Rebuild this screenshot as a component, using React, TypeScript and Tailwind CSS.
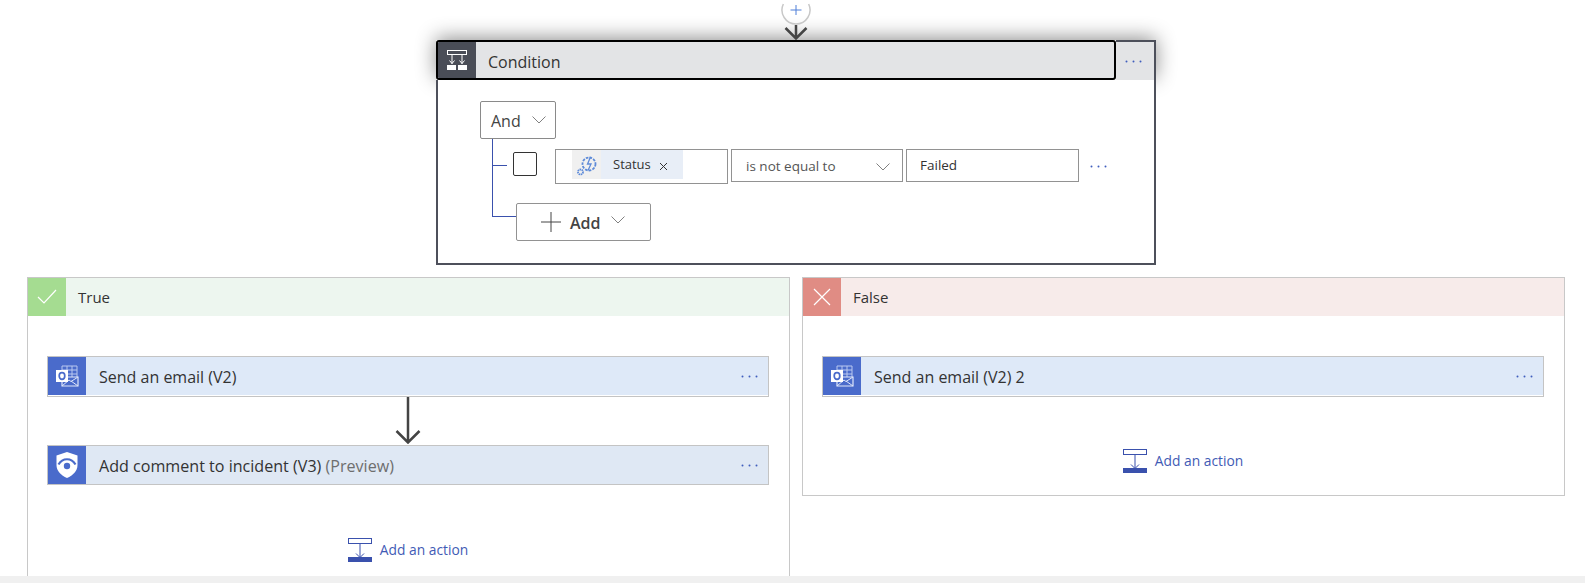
import type { ReactNode } from "react";

const FONT = "font-['Open_Sans','Noto_Sans',sans-serif]";

function Chevron({ className }: { className?: string }) {
  return (
    <svg width="14" height="8" viewBox="0 0 14 8" fill="none" className={className}>
      <path d="M0.500 0.500l6.500 6.500 6.500-6.500" stroke="#808080" strokeWidth="1" />
    </svg>
  );
}

function Dots() {
  return (
    <svg width="17" height="3" viewBox="0 0 17 3" fill="#3f5dbd">
      <circle cx="1.500" cy="1.500" r="1" />
      <circle cx="8.500" cy="1.500" r="1" />
      <circle cx="15.500" cy="1.500" r="1" />
    </svg>
  );
}

function ConditionIcon() {
  return (
    <svg width="22" height="22" viewBox="0 0 22 22" fill="none" stroke="#fff">
      <rect x="1.500" y="1.500" width="19" height="4" strokeWidth="1" />
      <path d="M6 6v9M16 6v9M3.500 11.500L6 14.500l2.500-3M13.500 11.500l2.500 3 2.500-3" strokeWidth="1" />
      <rect x="1" y="16" width="9" height="5" fill="#fff" stroke="none" />
      <rect x="12" y="16" width="9" height="5" fill="#fff" stroke="none" />
    </svg>
  );
}

function OutlookIcon() {
  return (
    <svg width="24" height="24" viewBox="0 0 24 24" fill="none">
      <path d="M7 2h15v12H7z" stroke="#b9c9f0" strokeWidth="1" />
      <path d="M12 2v11M17 2v11M7 6h15M7 10h15" stroke="#b9c9f0" strokeWidth="1" />
      <path d="M7 13h16v9H7z" fill="#4a6bcb" stroke="#dfe7fa" strokeWidth="1.200" />
      <path d="M7 22l7-6 2 1.500 7-4.500M16 17l7 5" stroke="#dfe7fa" strokeWidth="1" />
      <rect x="1" y="6" width="12" height="12" fill="#fff" />
      <ellipse cx="7" cy="12" rx="2.800" ry="3.300" stroke="#4a6bcb" strokeWidth="1.700" />
    </svg>
  );
}

function SentinelIcon() {
  return (
    <svg width="24" height="28" viewBox="0 0 24 28" fill="none">
      <path d="M12 1l10.500 3.500V14c0 6-4.500 10.500-10.500 13C6 24.500 1.500 20 1.500 14V4.500z" fill="#fff" />
      <path d="M3.500 13.500C7.500 6.500 16.500 6.500 20.500 13.500" stroke="#4a6bcb" strokeWidth="2.200" />
      <circle cx="12" cy="15" r="3.200" fill="#4a6bcb" />
    </svg>
  );
}

function AddActionIcon() {
  return (
    <svg width="24" height="24" viewBox="0 0 24 24" fill="none" stroke="#3a51ad">
      <rect x="0.500" y="0.500" width="23" height="5" strokeWidth="1" />
      <path d="M12 6v13M8 15.500l4 4 4-4" strokeWidth="1" />
      <rect x="0" y="19" width="24" height="5" fill="#3a51ad" stroke="none" />
    </svg>
  );
}

function AddAction() {
  return (
    <div className="flex items-center gap-2">
      <AddActionIcon />
      <span className="pt-[1px] text-[13.8px] text-[#3f5bb5]">Add an action</span>
    </div>
  );
}

function EmailCard({ children }: { children: ReactNode }) {
  return (
    <div className="flex h-[41px] items-stretch border border-[#c4c4c4] bg-[#dee9f8] shadow-[inset_0_-1px_0_#fff]">
      <div className="mb-px flex w-[38px] items-center justify-center bg-[#4a6bcb]">
        <OutlookIcon />
      </div>
      <div className="flex-1 pl-[13px] text-[16px] leading-[40px] text-[#333]">{children}</div>
      <div className="flex items-center pr-[10px]">
        <Dots />
      </div>
    </div>
  );
}

function Arrow({ height }: { height: number }) {
  return (
    <svg width="26" height={height} viewBox={`0 0 26 ${height}`} fill="none" stroke="#444" strokeWidth="2.500">
      <path d={`M13 0V${height - 1}M1.500 ${height - 13}L13 ${height - 1.500}L24.500 ${height - 13}`} />
    </svg>
  );
}

function Condition() {
  return (
    <div className="w-[720px]">
      <div className="flex h-[40px] shadow-[0_-2px_20px_rgba(0,0,0,0.45)]">
        <div className="flex w-[680px] items-stretch overflow-hidden rounded-[3px] border-2 border-black bg-[#e3e4e6]">
          <div className="flex w-[38px] items-center justify-center bg-[#4a4d57]">
            <ConditionIcon />
          </div>
          <div className="pl-3 pt-[2px] text-[16px] leading-[36px] text-[#333]">Condition</div>
        </div>
        <div className="flex flex-1 items-center border-t-2 border-r-2 border-[#4d505b] bg-[#e3e4e6] pl-[9px]">
          <Dots />
        </div>
      </div>
      <div className="relative h-[185px] border-x-2 border-b-2 border-[#4d505b] bg-white pl-[42px] pt-[21px]">
        <div className="flex h-[38px] w-[76px] items-center rounded-[2px] border border-[#8a8a8a] pl-[10px] text-[16px] text-[#444]">
          <span className="pt-[1px]">And</span>
          <Chevron className="ml-[11px]" />
        </div>
        <div className="relative ml-[12px]">
          <div className="absolute left-0 top-0 h-[78px] w-px bg-[#3a51ad]" />
          <div className="flex items-start pt-[10px]">
            <div className="mt-[16px] h-px w-[15px] bg-[#3a51ad]" />
            <div className="ml-[6px] mt-[3px] h-6 w-6 rounded-[2px] border border-[#333]" />
            <div className="ml-[18px] flex h-[35px] w-[173px] items-start border border-[#929292] pl-[16px]">
              <div className="flex h-[29px] w-[111px] items-center bg-[#e8eef7] text-[13px] text-[#333]">
                <div className="flex h-full w-[29px] items-center justify-center bg-[#f0f0f0]">
                  <svg width="24" height="24" viewBox="0 0 24 24" fill="none" stroke="#5d8ad8">
                    <circle cx="14" cy="11" r="6.500" strokeWidth="1.800" strokeDasharray="2.600 1.200" />
                    <path d="M15.500 4l-3 7h3.500l-3 6.500" strokeWidth="1.300" />
                    <circle cx="5.500" cy="19" r="2.500" strokeWidth="1.800" strokeDasharray="1.500 .6" />
                  </svg>
                </div>
                <span className="ml-[12px] pt-[1px]">Status</span>
                <svg width="9" height="9" viewBox="0 0 9 9" stroke="#333" className="ml-[8px] mt-[3px]">
                  <path d="M1 1l7 7M8 1L1 8" />
                </svg>
              </div>
            </div>
            <div className="ml-[3px] flex h-[33px] w-[172px] items-center justify-between border border-[#929292] pl-[14px] pr-[12px] text-[13.5px] text-[#555]">
              <span className="pt-[1px]">is not equal to</span>
              <Chevron className="mt-[3px]" />
            </div>
            <div className="ml-[3px] h-[33px] w-[173px] border border-[#929292] pl-[13px] text-[13.5px] leading-[31px] text-[#333]">
              Failed
            </div>
            <div className="ml-[11px] mt-[16px] flex">
              <Dots />
            </div>
          </div>
          <div className="flex items-start pt-[19px]">
            <div className="mt-[13px] h-px w-[24px] bg-[#3a51ad]" />
            <div className="flex h-[38px] w-[135px] items-center rounded-[2px] border border-[#929292] pl-[24px] text-[16px] font-semibold text-[#444]">
              <svg width="20" height="20" viewBox="0 0 20 20" stroke="#444" strokeWidth="1" className="mr-[9px]">
                <path d="M10 0v20M0 10h20" />
              </svg>
              <span className="pt-[1px]">Add</span>
              <Chevron className="ml-[10px] mb-1" />
            </div>
          </div>
        </div>
      </div>
    </div>
  );
}

function BranchHeader({ label, color, bg, icon }: { label: string; color: string; bg: string; icon: ReactNode }) {
  return (
    <div className={`flex h-[38px] items-stretch ${bg}`}>
      <div className={`flex w-[38px] items-center justify-center ${color}`}>{icon}</div>
      <div className="pl-3 text-[15px] leading-[38px] text-[#333]">{label}</div>
    </div>
  );
}

export default function App() {
  return (
    <div className={`h-[588px] w-[1585px] overflow-hidden bg-white ${FONT}`}>
      <div className="h-[576px] overflow-hidden">
        <div className="ml-[436px] flex h-[40px] w-[720px] flex-col items-center">
          <svg width="30" height="25" viewBox="0 0 30 25" fill="none">
            <path d="M2.350 4A14 14 0 1 0 27.650 4" stroke="#c8c8c8" strokeWidth="1.500" />
            <path d="M15 5v10M9.500 10h11" stroke="#4f7fd8" strokeWidth="1" />
          </svg>
          <div className="flex h-[15px] items-end">
            <svg width="26" height="15" viewBox="0 0 26 15" fill="none" stroke="#444" strokeWidth="2.500">
              <path d="M13 0v14M2.500 3L13 13.500L23.500 3" />
            </svg>
          </div>
        </div>
        <div className="ml-[436px]">
          <Condition />
        </div>
        <div className="ml-[27px] mt-[12px] flex items-start gap-[12px]">
          <div className="h-[320px] w-[763px] border-x border-t border-[#c8c8c8]">
            <BranchHeader
              label="True"
              color="bg-[#a5dc91]"
              bg="bg-[#edf6ef]"
              icon={
                <svg width="20" height="16" viewBox="0 0 20 16" fill="none" stroke="#fff" strokeWidth="1.200">
                  <path d="M1 8l6 6L19 1" />
                </svg>
              }
            />
            <div className="ml-[19px] mr-[20px] mt-[40px]">
              <EmailCard>Send an email (V2)</EmailCard>
              <div className="flex h-[48px] justify-center">
                <Arrow height={47} />
              </div>
              <div className="flex h-10 items-stretch border border-[#c4c4c4] bg-[#dfe8f4]">
                <div className="flex w-[38px] items-center justify-center bg-[#4a6bcb]">
                  <SentinelIcon />
                </div>
                <div className="flex-1 pl-[13px] text-[16.1px] leading-[40px] text-[#333]">
                  Add comment to incident (V3) <span className="text-[#6e6e6e]">(Preview)</span>
                </div>
                <div className="flex items-center pr-[10px]">
                  <Dots />
                </div>
              </div>
              <div className="mt-[53px] flex justify-center">
                <AddAction />
              </div>
            </div>
          </div>
          <div className="h-[219px] w-[763px] border border-[#c8c8c8]">
            <BranchHeader
              label="False"
              color="bg-[#e08c84]"
              bg="bg-[#f7ebea]"
              icon={
                <svg width="18" height="18" viewBox="0 0 18 18" fill="none" stroke="#fff" strokeWidth="1.200">
                  <path d="M1 1l16 16M17 1L1 17" />
                </svg>
              }
            />
            <div className="ml-[19px] mr-[20px] mt-[40px]">
              <EmailCard>Send an email (V2) 2</EmailCard>
              <div className="mt-[52px] flex justify-center">
                <AddAction />
              </div>
            </div>
          </div>
        </div>
      </div>
      <div className="h-[7px] bg-[#f0f0f0]" />
    </div>
  );
}
